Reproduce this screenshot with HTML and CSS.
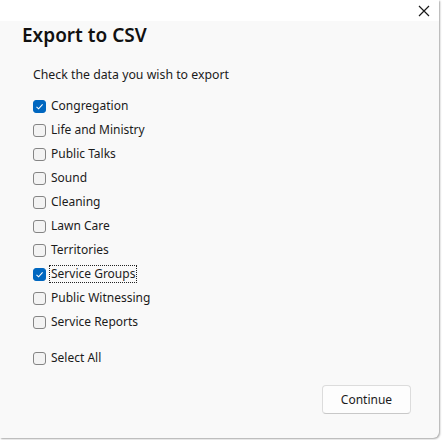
FILE: index.html
```html
<!DOCTYPE html>
<html>
<head>
<meta charset="utf-8">
<link rel="stylesheet" href="styles.css">
</head>
<body>
<div class="window">
  <div class="titlebar">
    <span class="close">
      <svg width="12" height="12" viewBox="0 0 12 12"><path d="M1 1 L11 11 M11 1 L1 11" stroke="#1a1a1a" stroke-width="1.2" fill="none"/></svg>
    </span>
  </div>
  <div class="content">
    <h1 class="title">Export to CSV</h1>
    <p class="prompt">Check the data you wish to export</p>
    <ul class="options">
      <li class="option"><span class="box checked"><svg width="9" height="9" viewBox="0 0 9 9"><path d="M1.5 4.8 L3.6 6.8 L7.6 2.4" stroke="#fff" stroke-width="1.1" fill="none"/></svg></span><span class="label">Congregation</span></li>
      <li class="option"><span class="box"></span><span class="label">Life and Ministry</span></li>
      <li class="option"><span class="box"></span><span class="label">Public Talks</span></li>
      <li class="option"><span class="box"></span><span class="label">Sound</span></li>
      <li class="option"><span class="box"></span><span class="label">Cleaning</span></li>
      <li class="option"><span class="box"></span><span class="label">Lawn Care</span></li>
      <li class="option"><span class="box"></span><span class="label">Territories</span></li>
      <li class="option"><span class="box checked"><svg width="9" height="9" viewBox="0 0 9 9"><path d="M1.5 4.8 L3.6 6.8 L7.6 2.4" stroke="#fff" stroke-width="1.1" fill="none"/></svg></span><span class="label focused">Service Groups</span></li>
      <li class="option"><span class="box"></span><span class="label">Public Witnessing</span></li>
      <li class="option"><span class="box"></span><span class="label">Service Reports</span></li>
    </ul>
    <div class="option selectall"><span class="box"></span><span class="label">Select All</span></div>
    <div class="actions">
      <button class="btn">Continue</button>
    </div>
  </div>
</div>
</body>
</html>
```
FILE: styles.css
```css
* { box-sizing: border-box; }
html, body { margin: 0; padding: 0; background: #ffffff; }
body {
  font-family: "Noto Sans", "Open Sans", sans-serif;
  color: #1b1b1b;
  width: 442px;
  height: 440px;
  overflow: hidden;
}
.window {
  width: 439px;
  height: 438px;
  background: #f9f9f9;
  box-shadow: 1px 1px 2px rgba(0,0,0,0.35);
  border-bottom-right-radius: 6px;
  display: flex;
  flex-direction: column;
}
.titlebar {
  height: 21px;
  background: #ffffff;
  display: flex;
  justify-content: flex-end;
  align-items: center;
  padding-right: 9px;
  padding-top: 1px;
}
.close { display: flex; width: 12px; height: 12px; }
.content {
  padding: 0 0 0 22px;
  display: flex;
  flex-direction: column;
  flex: 1;
}
.title {
  margin: 0;
  font-size: 19px;
  font-weight: 600;
  line-height: 28px;
  color: #111;
}
.prompt {
  margin: 18px 0 0 11px;
  font-size: 12.3px;
  line-height: 16px;
}
.options {
  list-style: none;
  margin: 14px 0 0 11px;
  padding: 0;
  display: flex;
  flex-direction: column;
  gap: 6px;
}
.option {
  display: flex;
  align-items: center;
  height: 18px;
  font-size: 12px;
}
.box {
  width: 13px;
  height: 13px;
  border: 1px solid #858585;
  border-radius: 3px;
  background: #f3f3f3;
  margin-right: 4px;
  display: flex;
  align-items: center;
  justify-content: center;
  flex: none;
}
.box.checked {
  background: #0067c0;
  border-color: #0067c0;
}
.label { padding: 0 1px; line-height: 16px; }
.label.focused { outline: 1px dotted #222; }
.selectall { margin: 18px 0 0 11px; }
.actions {
  display: flex;
  justify-content: flex-end;
  margin-top: 18px;
  padding-right: 28px;
}
.btn {
  width: 89px;
  height: 29px;
  font-family: inherit;
  font-size: 12px;
  color: #1b1b1b;
  background: #fdfdfd;
  border: 1px solid #dcdcdc;
  border-bottom-color: #c8c8c8;
  border-radius: 4px;
  padding: 0;
}
```
